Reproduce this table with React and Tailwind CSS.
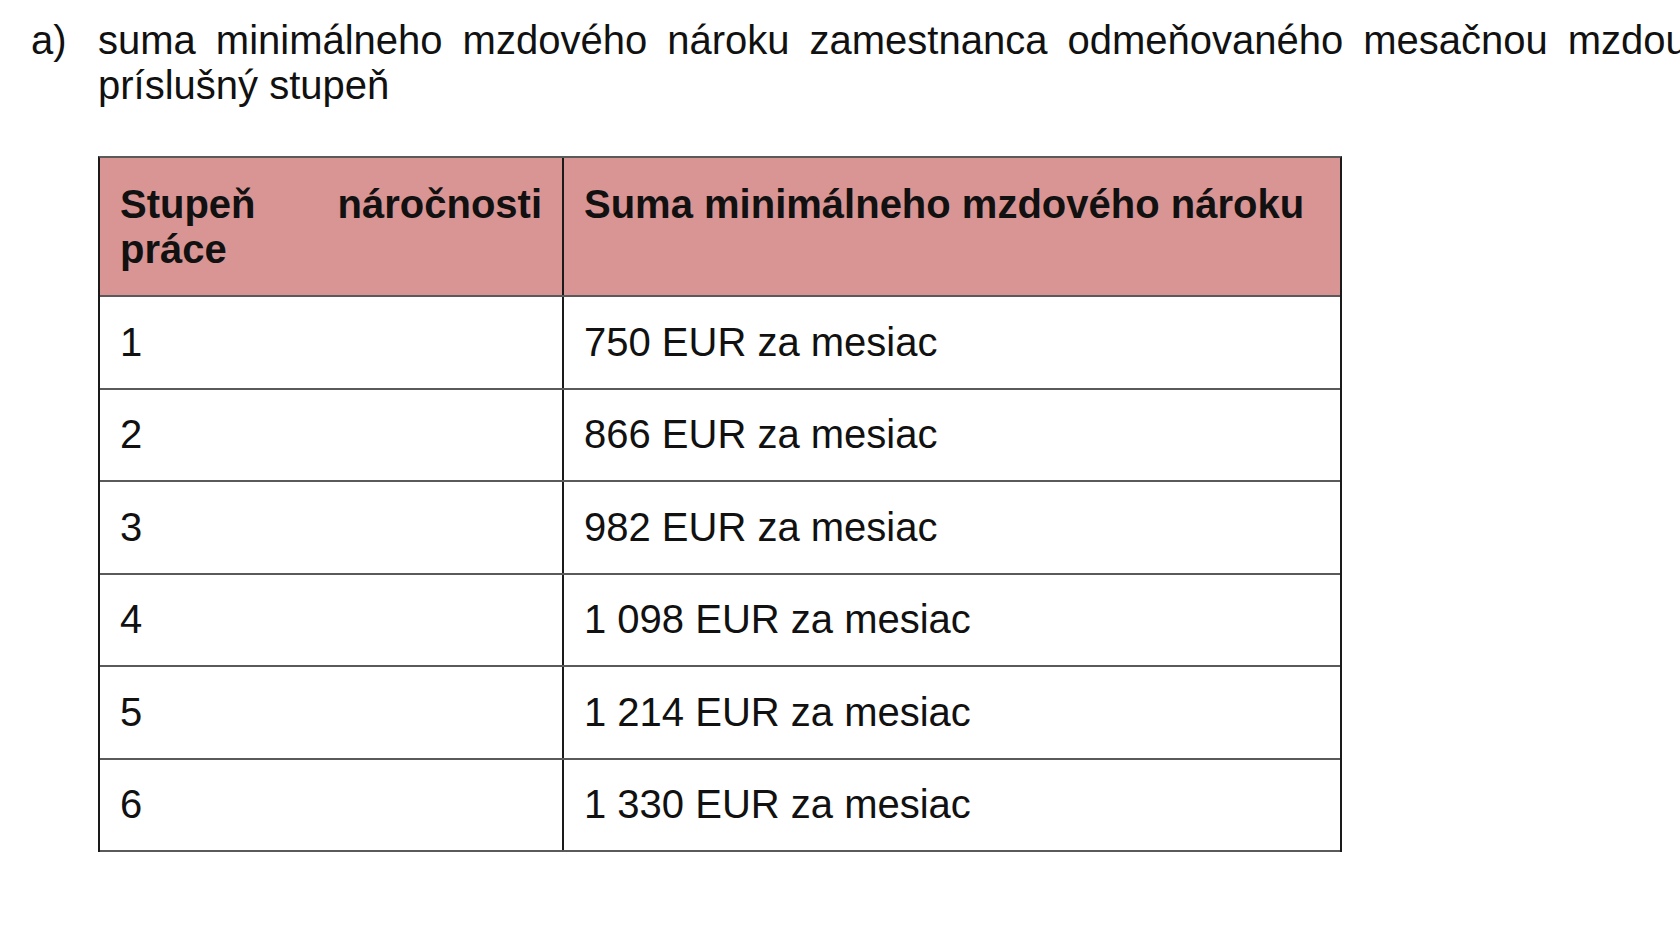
const rows = [
  { grade: '1', amount: '750 EUR za mesiac' },
  { grade: '2', amount: '866 EUR za mesiac' },
  { grade: '3', amount: '982 EUR za mesiac' },
  { grade: '4', amount: '1 098 EUR za mesiac' },
  { grade: '5', amount: '1 214 EUR za mesiac' },
  { grade: '6', amount: '1 330 EUR za mesiac' },
];

const firstLine = ['suma', 'minimálneho', 'mzdového', 'nároku', 'zamestnanca', 'odmeňovaného', 'mesačnou', 'mzdou'];

export default function App() {
  return (
    <div className="w-full h-[945px] overflow-hidden bg-white text-[#111] font-['Liberation_Sans',Arial,sans-serif] text-[40px] leading-[45px]">
      <div className="flex pl-[31px] pt-[18px]">
        <div className="w-[67px] shrink-0">a)</div>
        <div className="min-w-0">
          {/* justified first line runs past the right edge */}
          <div className="flex gap-5 whitespace-nowrap">
            {firstLine.map((w, i) => (
              <span key={i}>{w}</span>
            ))}
          </div>
          <div>príslušný stupeň</div>

          {/* ═══ Table ═══ */}
          <div className="mt-[48px] w-[1244px] border-t-2 border-t-[#5a5a5a] border-x-2 border-x-[#1a1a1a]">
            <div className="flex h-[139px] bg-[#d99594] border-b-2 border-[#5a5a5a] font-bold">
              <div className="w-[464px] shrink-0 border-r-2 border-[#1a1a1a] px-5 pt-[24px] text-justify">
                Stupeň náročnosti práce
              </div>
              <div className="flex-1 px-5 pt-[24px] whitespace-nowrap">Suma minimálneho mzdového nároku</div>
            </div>
            {rows.map((r) => (
              <div key={r.grade} className="flex h-[92.5px] border-b-2 border-[#5a5a5a]">
                <div className="w-[464px] shrink-0 border-r-2 border-[#1a1a1a] px-5 flex items-center">{r.grade}</div>
                <div className="flex-1 px-5 flex items-center">{r.amount}</div>
              </div>
            ))}
          </div>
        </div>
      </div>
    </div>
  );
}
